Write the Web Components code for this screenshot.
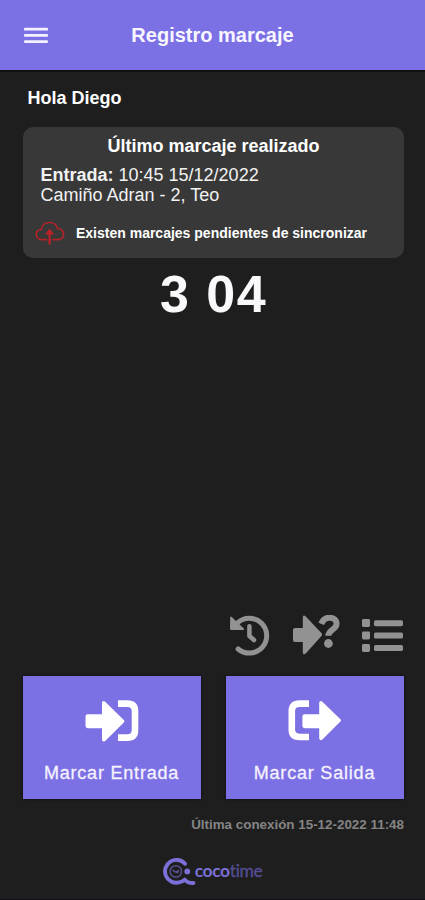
<!DOCTYPE html>
<html lang="es">
<head>
<meta charset="utf-8">
<title>Registro marcaje</title>
<style>
html,body{margin:0;height:100%;background:#1e1e1e}
body{font-family:"Liberation Sans",Arial,sans-serif;color:#fff;overflow:hidden}
</style>
</head>
<body>
<coco-app></coco-app>
<script>
const define = (name, html) => customElements.define(name, class extends HTMLElement {
  constructor() {
    super();
    const t = document.createElement('template');
    t.innerHTML = html;
    this.attachShadow({mode: 'open'}).append(t.content.cloneNode(true));
  }
});

const icons = {
  menu: [24, 18, '<path d="M1.2 3.2H22.8M1.2 9.4H22.8M1.2 15.6H22.8" fill="none" stroke="currentColor" stroke-width="2.7" stroke-linecap="round"/>'],
  cloud: [30, 24, '<g fill="none" stroke="currentColor" stroke-width="1.7" stroke-linecap="round" stroke-linejoin="round"><path d="M11.5 18.7H7.2C3.6 18.7 1.3 16.5 1.3 13.5C1.3 10.9 3.2 8.9 6.2 8.5C6.8 4.2 10.2 1.5 14.5 1.5C18.6 1.5 21.6 3.8 22.6 7.5C26.4 7.9 28.6 10.1 28.6 13.2C28.6 16.4 26.3 18.7 22.8 18.7H17.8"/><path d="M14.6 22.5V11" stroke-width="2.4"/></g><path d="M9.8 13.4L14.6 7.4L19.4 13.4Z" fill="currentColor"/>'],
  history: [42, 42, '<path d="M8.2 9.2A17.4 17.4 0 1 1 9.1 35" fill="none" stroke="currentColor" stroke-width="5" stroke-linecap="round"/><path d="M1.2 3.6Q1.2 1.6 2.8 3L14.8 14.4Q15.8 15.9 14 15.9H2.4Q1 15.9 1 14.4Z" fill="currentColor"/><path d="M20.4 12.3V22L25 26" fill="none" stroke="currentColor" stroke-width="4.5" stroke-linecap="round" stroke-linejoin="round"/>'],
  ask: [48, 40, '<path d="M3 13H10.8V3Q10.8-1.2 14 1.7L29.4 18Q30.8 19.5 29.4 21L14 38.3Q10.8 41 10.8 37V27H3Q1 27 1 25V15Q1 13 3 13Z" fill="currentColor"/><path d="M29.3 8.8C31 4.6 34 2.7 37.4 2.7C41.6 2.7 44.6 5.2 44.6 8.8C44.6 14.8 36.4 14.6 36.4 20.8" fill="none" stroke="currentColor" stroke-width="6"/><circle cx="36.4" cy="28.5" r="4.4" fill="currentColor"/>'],
  list: [42, 35, '<g fill="currentColor"><rect x="1" y="1" width="8" height="8" rx="1.4"/><rect x="1" y="13.5" width="8" height="8" rx="1.4"/><rect x="1" y="26" width="8" height="8" rx="1.4"/><rect x="13" y="2.2" width="29" height="6" rx="1.6"/><rect x="13" y="14.6" width="29" height="6" rx="1.6"/><rect x="13" y="26.9" width="29" height="6" rx="1.6"/></g>'],
  enter: [54, 42, '<path d="M2.8 14.2H17V3.2Q17.2-.2 20.2 1.8L38.8 20Q40 21.2 38.8 22.4L20.2 40.9Q17.2 42.5 17 39.4V28.2H2.8Q.5 28.2 .5 25.8V16.6Q.5 14.2 2.8 14.2Z" fill="currentColor"/><path d="M33 3.6H42.3Q50 3.6 50 11V30.2Q50 37.6 42.3 37.6H33" fill="none" stroke="currentColor" stroke-width="6.6"/>'],
  exit: [54, 42, '<path d="M17 14.2H31.2V3Q31.4-.2 34.4 1.8L52.4 19.2Q53.6 20.4 52.4 21.6L34.4 39.6Q31.4 41.2 31.2 38V28.2H17Q14.4 28.2 14.4 25.8V16.6Q14.4 14.2 17 14.2Z" fill="currentColor"/><path d="M21 3.6H11.4Q3.8 3.6 3.8 11V29.6Q3.8 37 11.4 37H21" fill="none" stroke="currentColor" stroke-width="6.6"/>'],
  logo: [34, 28, '<g fill="none" stroke="currentColor"><path d="M22 5.8A11.4 11.4 0 1 0 16 24.4Q19.5 23.8 21.8 21.6Q24.5 25.2 30.4 25" stroke-width="3.9" stroke-linecap="round" stroke-linejoin="round"/><circle cx="12.8" cy="13.4" r="5.7" stroke-width="1.5" opacity=".6"/><path d="M9.5 12.2L13 14.2L16 12.5M13 14.2H15.5" stroke-width="1.5" opacity=".65"/></g><circle cx="24.3" cy="13.4" r="2.9" fill="currentColor"/>']
};

customElements.define('coco-icon', class extends HTMLElement {
  connectedCallback() {
    if (this.shadowRoot) return;
    const [w, h, art] = icons[this.getAttribute('name')];
    this.attachShadow({mode: 'open'}).innerHTML =
      `<style>:host{display:block;flex:none;width:${w}px;height:${h}px}svg{display:block}</style><svg width="${w}" height="${h}" viewBox="0 0 ${w} ${h}" aria-hidden="true">${art}</svg>`;
  }
});

define('coco-header', `<style>
:host{display:grid;grid-template-columns:24px 1fr 24px;align-items:center;box-sizing:border-box;height:72px;padding:0 24px;background:#7c71e4;border-bottom:2px solid #101014}
coco-icon{color:#f3f0ff}
h1{margin:0;font-size:20px;line-height:24px;text-align:center;color:#f8f6ff}
</style><coco-icon name="menu"></coco-icon><h1><slot></slot></h1>`);

define('last-record', `<style>
:host{display:block;box-sizing:border-box;height:131px;padding:9px 14px 0;border-radius:10px;background:#383838}
h2{margin:0;font-size:18px;line-height:21px;text-align:center}
.detail{margin:8px 0 0 3.5px;font-size:18px;line-height:20px;color:#f2f2f2}
.sync{display:flex;align-items:center;gap:12px;height:22px;margin-top:17px;font-weight:bold;font-size:14px;line-height:20px}
coco-icon{color:#b52228;margin:0 -1px 0 -2px}
</style><h2>Último marcaje realizado</h2><div class="detail"><slot></slot></div>
<div class="sync"><coco-icon name="cloud"></coco-icon><slot name="sync"></slot></div>`);

define('elapsed-time', `<style>
:host{display:block;margin-top:6px;font-weight:bold;font-size:52px;line-height:60px;letter-spacing:1.5px;text-align:center;color:#f9f9fc}
</style><slot></slot>`);

define('quick-actions', `<style>
:host{display:flex;justify-content:flex-end;align-items:center;gap:21px;height:42px;padding-right:1.5px;color:#929292}
</style><coco-icon name="history"></coco-icon><coco-icon name="ask"></coco-icon><coco-icon name="list"></coco-icon>`);

define('record-button', `<style>
:host{display:block;box-shadow:0 0 2px #080808}
button{display:flex;flex-direction:column;align-items:center;gap:20px;width:100%;height:123px;box-sizing:border-box;padding:24px 1px 0 0;border:0;background:#7c71e4;color:#fff;font:18px/22px "Liberation Sans",Arial,sans-serif;letter-spacing:.8px}
span{color:#f5f1ff;-webkit-text-stroke:.3px #f5f1ff}
</style><button><slot name="icon"></slot><span><slot></slot></span></button>`);

define('coco-logo', `<style>
:host{display:flex;justify-content:center;align-items:center;height:28px;margin-right:2px;color:#7b70d8}
span{margin-left:-2px;font:700 17.5px/24px Lato,sans-serif;letter-spacing:-.4px;transform:translateY(-1px)}
i{font-style:normal;font-weight:400;color:#554d94;-webkit-text-stroke:.35px #554d94}
</style><coco-icon name="logo"></coco-icon><span>coco<i>time</i></span>`);

define('coco-app', `<style>
:host{display:flex;flex-direction:column;box-sizing:border-box;height:900px;border-bottom:1px solid #120a14;background:#1e1e1e}
main{display:flex;flex-direction:column;flex:1;padding:0 21px 0 23px}
.hello{margin:16px 0 18px 4.5px;font-weight:bold;font-size:18px;line-height:21px}
quick-actions{margin-top:auto}
.buttons{display:grid;grid-template-columns:178px 178px;justify-content:space-between;margin-top:20px}
.last{margin-top:17px;text-align:right;font-weight:bold;font-size:13.4px;line-height:18px;color:#858585}
coco-logo{margin:24px 2px 13px 0}
</style>
<coco-header>Registro marcaje</coco-header>
<main>
<div class="hello">Hola Diego</div>
<last-record><b>Entrada:</b> 10:45 15/12/2022<br>Camiño Adran - 2, Teo<span slot="sync">Existen marcajes pendientes de sincronizar</span></last-record>
<elapsed-time>3 04</elapsed-time>
<quick-actions></quick-actions>
<div class="buttons">
<record-button><coco-icon slot="icon" name="enter"></coco-icon>Marcar Entrada</record-button>
<record-button><coco-icon slot="icon" name="exit"></coco-icon>Marcar Salida</record-button>
</div>
<div class="last">Última conexión 15-12-2022 11:48</div>
<coco-logo></coco-logo>
</main>`);
</script>
</body>
</html>
